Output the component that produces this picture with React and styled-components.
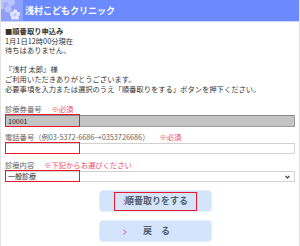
import React from "react";
import styled, { createGlobalStyle } from "styled-components";

const Global = createGlobalStyle`
  html, body { margin: 0; padding: 0; background: #fff; }
  body { font-family: "Noto Sans CJK JP", "Noto Sans", sans-serif; color: #333; }
`;

const Page = styled.div`
  width: 300px;
  min-height: 246px;
  box-sizing: border-box;
  border-left: 1px solid #e2e2e2;
  border-right: 1px solid #e2e2e2;
`;

const Header = styled.header`
  height: 21px;
  background: #6b8aff;
  border-bottom: 1px solid #cdd6ff;
  display: flex;
  align-items: center;
  gap: 2px;
`;

const Title = styled.h1`
  margin: 0;
  font-size: 9px;
  font-weight: 700;
  color: #fff;
  letter-spacing: 0;
  line-height: 1;
`;

const Content = styled.main`
  padding: 5px 4px 0 4px;
  font-size: 7.3px;
  line-height: 9.6px;
`;

const Heading = styled.div`
  font-weight: 700;
  color: #333;
`;

const Para = styled.p`
  margin: 0 0 ${(p) => p.$gap || 0}px 0;
`;

const Label = styled.div`
  color: #666;
  line-height: 10px;
  margin-top: ${(p) => p.$top}px;
  white-space: nowrap;
`;

const Req = styled.span`
  color: #f0486a;
  margin-left: 10px;
`;

const Field = styled.div`
  position: relative;
  margin-top: 1px;
`;

const Input = styled.div`
  box-sizing: border-box;
  height: ${(p) => p.$h}px;
  border: 1px solid ${(p) => (p.$gray ? "#9a9a9a" : "#d4d4d4")};
  border-top-color: ${(p) => (p.$gray ? "#888" : "#d0d0d0")};
  background: ${(p) => (p.$gray ? "#c4c4c4" : "#fff")};
  border-radius: 1px;
  font-size: 7px;
  line-height: ${(p) => p.$h - 2}px;
  padding-left: 2px;
  color: #222;
  display: flex;
  align-items: center;
  justify-content: space-between;
`;

const Arrow = styled.svg`
  margin-right: 4px;
`;

const Mark = styled.div`
  position: absolute;
  left: ${(p) => p.$l}px;
  top: ${(p) => p.$t}px;
  width: ${(p) => p.$w}px;
  height: ${(p) => p.$h}px;
  border: 1.5px solid #e8192c;
  box-sizing: border-box;
  pointer-events: none;
`;

const Buttons = styled.div`
  display: flex;
  flex-direction: column;
  gap: 8px;
  padding-left: 94px;
  margin-top: 8px;
`;

const Btn = styled.div`
  position: relative;
  width: 113px;
  height: 22px;
  box-sizing: border-box;
  background: #d4e5fb;
  border: 1px solid #e3edfc;
  border-radius: 4px;
  display: flex;
  align-items: center;
  justify-content: center;
  padding-left: 2px;
  font-size: 9px;
  font-weight: 700;
  color: #4d5e6e;
  white-space: pre;
  &::before {
    content: "";
    position: absolute;
    left: 22px;
    top: 8.5px;
    width: 2.5px;
    height: 2.5px;
    border-top: 1.2px solid #e86aa8;
    border-right: 1.2px solid #e86aa8;
    transform: rotate(45deg);
  }
`;

function Logo() {
  return (
    <svg width="22" height="21" viewBox="0 0 22 21">
      <rect width="22" height="21" fill="#8d9fff" />
      <g fill="#b9c3ff">
        <circle cx="3" cy="-1" r="4" />
        <circle cx="10" cy="2" r="4" />
        <circle cx="-1" cy="6" r="4" />
        <circle cx="7" cy="9" r="3.5" />
      </g>
      <circle cx="5" cy="4" r="2" fill="#a4b2ff" />
      <g fill="#dfe5ff">
        <circle cx="14" cy="11.5" r="2.2" />
        <circle cx="17" cy="14" r="2.2" />
        <circle cx="15.8" cy="17.5" r="2.2" />
        <circle cx="12" cy="17.5" r="2.2" />
        <circle cx="11" cy="14" r="2.2" />
      </g>
      <circle cx="14" cy="15" r="1.3" fill="#b8c4ff" />
    </svg>
  );
}

export default function App() {
  return (
    <>
      <Global />
      <Page>
        <Header>
          <Logo />
          <Title>浅村こどもクリニック</Title>
        </Header>
        <Content>
          <Heading>■順番取り申込み</Heading>
          <Para>1月1日12時00分現在</Para>
          <Para $gap={9.6}>待ちはありません。</Para>
          <Para>『浅村 太郎』様</Para>
          <Para>ご利用いただきありがとうございます。</Para>
          <Para>必要事項を入力または選択のうえ「順番取りをする」ボタンを押下ください。</Para>

          <Label $top={10}>
            診療券番号<Req>※必須</Req>
          </Label>
          <Field>
            <Input $gray $h={12}>10001</Input>
            <Mark $l={0} $t={-1} $w={75} $h={13} />
          </Field>

          <Label $top={5}>
            電話番号（例03-5372-6686→0353726686）<Req>※必須</Req>
          </Label>
          <Field>
            <Input $h={11} />
            <Mark $l={0} $t={-1} $w={75} $h={12} />
          </Field>

          <Label $top={6}>
            診療内容<Req>※下記からお選びください</Req>
          </Label>
          <Field>
            <Input $h={11}>
              <span>一般診療</span>
              <Arrow width="5" height="4" viewBox="0 0 5 4">
                <path d="M0.5 0.8 L2.5 3 L4.5 0.8" stroke="#444" strokeWidth="1.2" fill="none" />
              </Arrow>
            </Input>
            <Mark $l={0} $t={-1} $w={75} $h={12} />
          </Field>

          <Buttons>
            <Btn>
              順番取りをする
              <Mark $l={14} $t={1} $w={83} $h={19} />
            </Btn>
            <Btn>{"戻　る"}</Btn>
          </Buttons>
        </Content>
      </Page>
    </>
  );
}
